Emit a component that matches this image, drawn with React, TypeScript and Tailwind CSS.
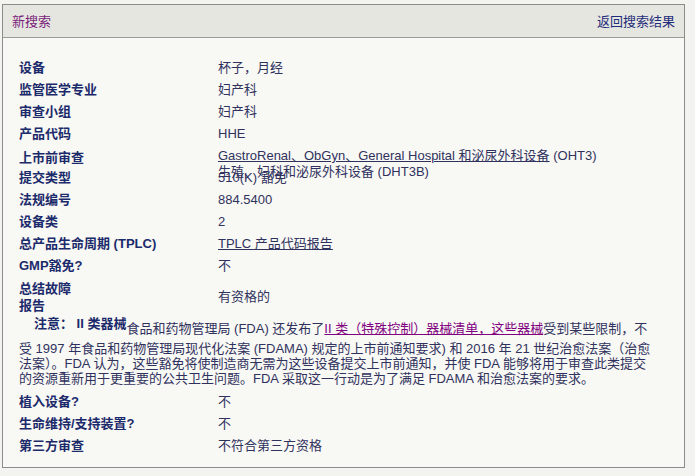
const ROWS_TOP: [string, React.ReactNode][] = [
  ['设备', '杯子，月经'],
  ['监管医学专业', '妇产科'],
  ['审查小组', '妇产科'],
  ['产品代码', 'HHE'],
]

const ROWS_MID: [string, React.ReactNode][] = [
  ['提交类型', '510(K) 豁免'],
  ['法规编号', '884.5400'],
  ['设备类', '2'],
  ['总产品生命周期 (TPLC)', <a className="underline">TPLC 产品代码报告</a>],
  ['GMP豁免?', '不'],
]

const ROWS_END: [string, React.ReactNode][] = [
  ['植入设备?', '不'],
  ['生命维持/支持装置?', '不'],
  ['第三方审查', '不符合第三方资格'],
]

function Row({ label, value }: { label: string; value: React.ReactNode }) {
  return (
    <div className="flex h-[22px] items-center">
      <div className="w-[199px] shrink-0 font-bold text-[#1b2a6b]">{label}</div>
      <div className="text-[#30325e]">{value}</div>
    </div>
  )
}

export default function App() {
  return (
    <div
      className="min-h-[476px] bg-[#f3f3ef] pt-[4px] pl-[2px] text-[13px]"
      style={{ fontFamily: '"Liberation Sans", Arial, "Noto Sans CJK SC", sans-serif' }}
    >
      <div className="w-[683px] border border-[#8c8c8c] bg-[#f8f8f4]">
        <div className="flex h-[33px] items-center justify-between border-b border-[#9a9a9a] bg-[#e6e6e1] px-[9px] pt-[1px]">
          <a className="text-[#7a1f7a]">新搜索</a>
          <a className="text-[#1f2d7a]">返回搜索结果</a>
        </div>

        <div className="px-[16px] pt-[19px] pb-[10px]">
          {ROWS_TOP.map(([l, v]) => (
            <Row key={l} label={l} value={v} />
          ))}

          <div className="flex h-[22px] items-start pt-[3px]">
            <div className="w-[199px] shrink-0 font-bold text-[#1b2a6b]">上市前审查</div>
            <div className="leading-[16px] text-[#30325e]">
              <a className="underline">GastroRenal、ObGyn、General Hospital 和泌尿外科设备</a> (OHT3)
              <br />
              生殖、妇科和泌尿外科设备 (DHT3B)
            </div>
          </div>

          {ROWS_MID.map(([l, v]) => (
            <Row key={l} label={l} value={v} />
          ))}

          <div className="flex h-[39px] items-center">
            <div className="w-[199px] shrink-0 font-bold leading-[17px] text-[#1b2a6b]">
              总结故障
              <br />
              报告
            </div>
            <div className="text-[#30325e]">有资格的</div>
          </div>

          <p className="w-[639px] indent-[15px] leading-[15px] text-[#30325e]">
            <b className="align-[5px] text-[#1b2a6b]">注意： II 类器械</b>
            <span className="inline-block h-[20px] w-0 align-[-8px]" />
            食品和药物管理局 (FDA) 还发布了
            <a className="text-[#800080] underline">II 类（特殊控制）器械清单，这些器械</a>
            受到某些限制，不受 1997 年食品和药物管理局现代化法案 (FDAMA) 规定的上市前通知要求) 和 2016 年 21 世纪治愈法案（治愈法案）。FDA
            认为，这些豁免将使制造商无需为这些设备提交上市前通知，并使 FDA 能够将用于审查此类提交的资源重新用于更重要的公共卫生问题。FDA
            采取这一行动是为了满足 FDAMA 和治愈法案的要求。
          </p>

          <div className="mt-[5px]">
            {ROWS_END.map(([l, v]) => (
              <Row key={l} label={l} value={v} />
            ))}
          </div>
        </div>
      </div>
    </div>
  )
}
